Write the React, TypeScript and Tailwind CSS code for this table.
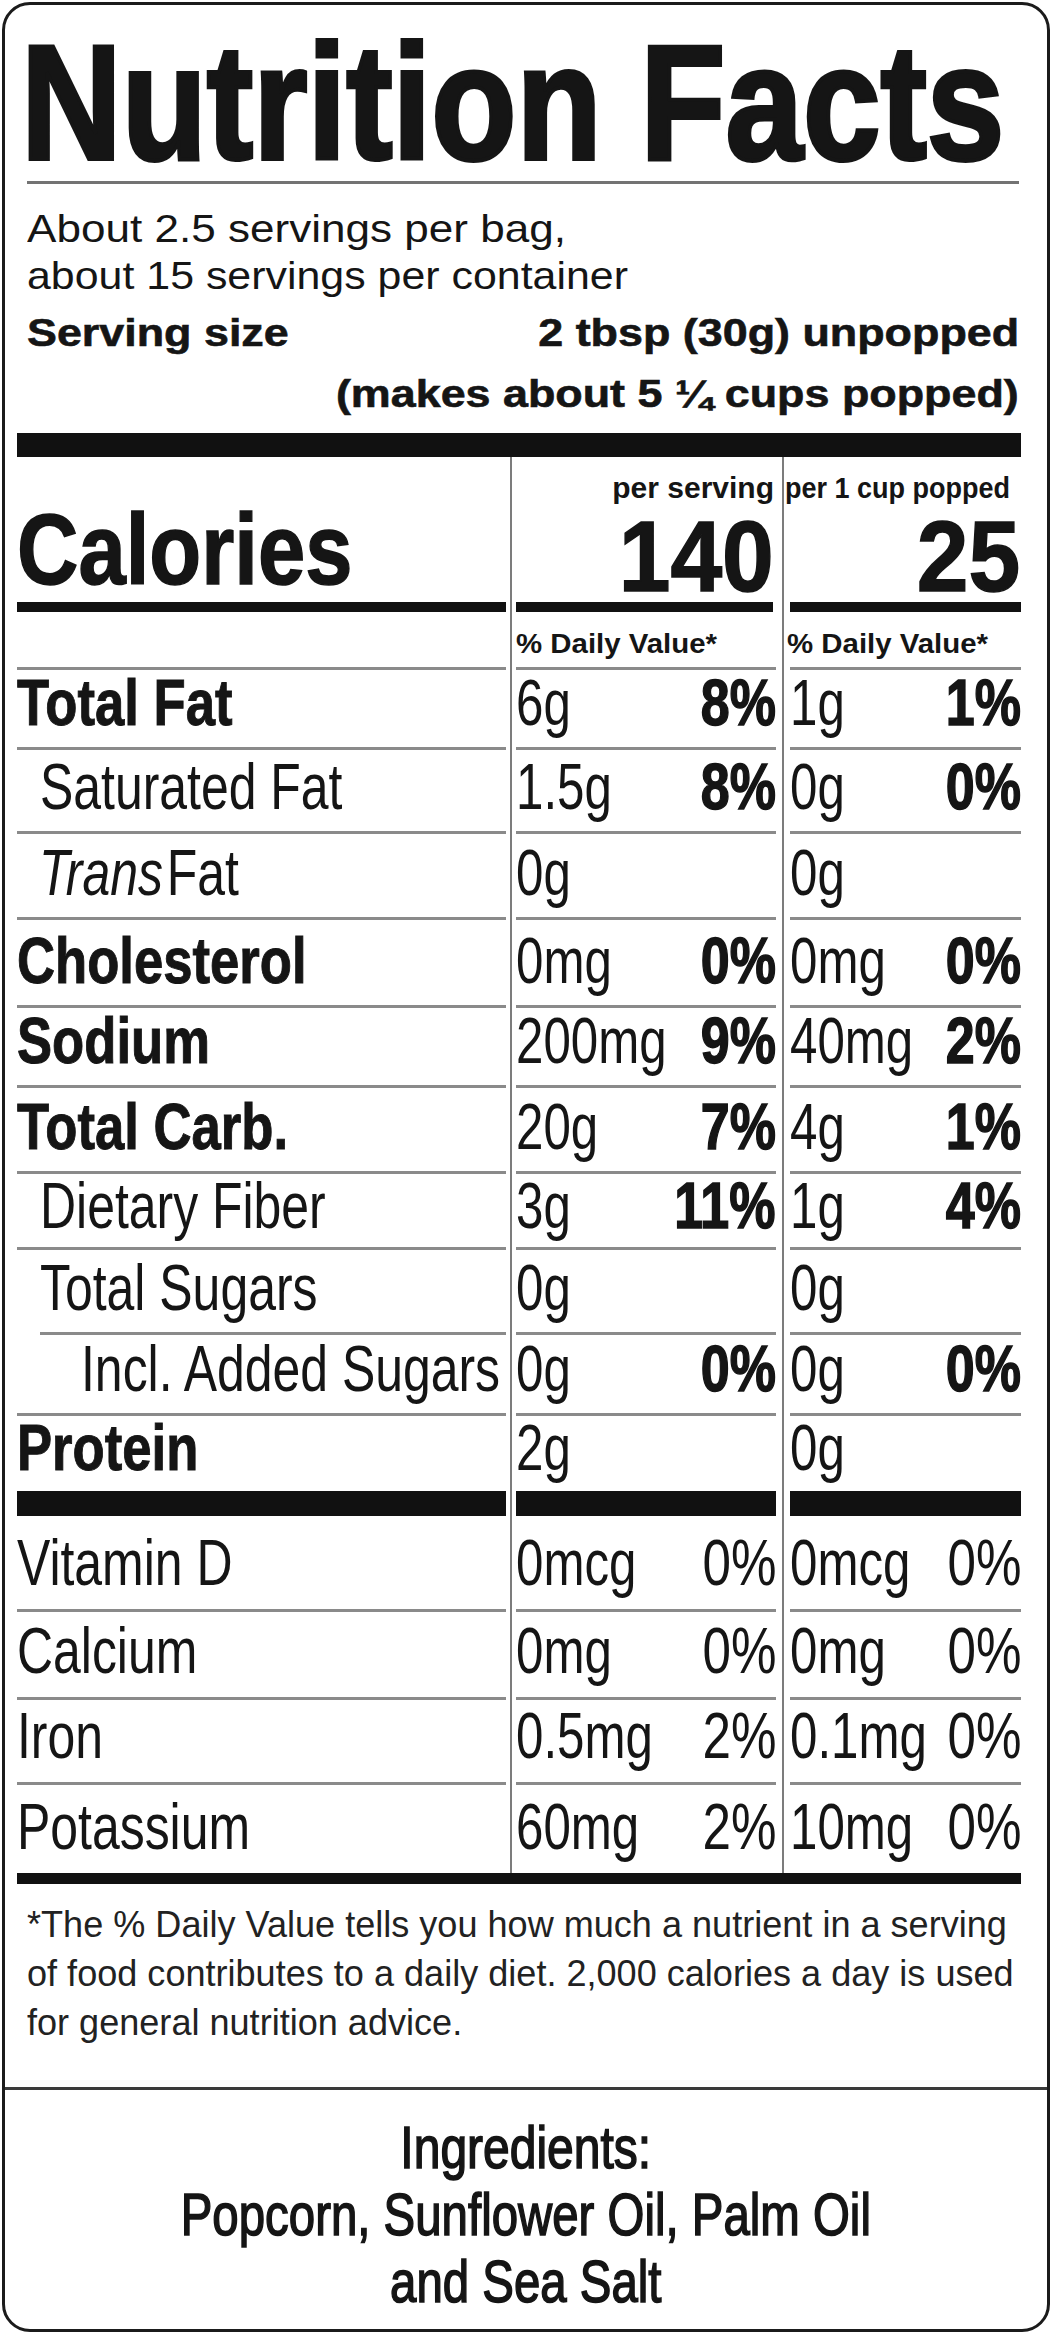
import type { ReactNode } from "react";

type Nutrient = {
  label: ReactNode;
  bold?: boolean;
  pad?: string;
  rule?: string;
  noRule?: boolean;
  h: string;
  a: string;
  ap?: string;
  b: string;
  bp?: string;
};

const mainRows: Nutrient[] = [
  { label: "Total Fat", bold: true, h: "h-[80px]", a: "6g", ap: "8%", b: "1g", bp: "1%" },
  { label: "Saturated Fat", pad: "pl-[23px]", h: "h-[84px]", a: "1.5g", ap: "8%", b: "0g", bp: "0%" },
  {
    label: (
      <>
        <i className="mr-[5px]">Trans</i>Fat
      </>
    ),
    pad: "pl-[22px]",
    h: "h-[86px]",
    a: "0g",
    b: "0g",
  },
  { label: "Cholesterol", bold: true, h: "h-[88px]", a: "0mg", ap: "0%", b: "0mg", bp: "0%" },
  { label: "Sodium", bold: true, h: "h-[80px]", a: "200mg", ap: "9%", b: "40mg", bp: "2%" },
  { label: "Total Carb.", bold: true, h: "h-[86px]", a: "20g", ap: "7%", b: "4g", bp: "1%" },
  { label: "Dietary Fiber", pad: "pl-[23px]", h: "h-[76px]", a: "3g", ap: "11%", b: "1g", bp: "4%" },
  { label: "Total Sugars", pad: "pl-[23px]", h: "h-[85px]", a: "0g", b: "0g" },
  {
    label: "Incl. Added Sugars",
    pad: "pl-[64px]",
    rule: "ml-[23px]",
    h: "h-[81px]",
    a: "0g",
    ap: "0%",
    b: "0g",
    bp: "0%",
  },
  { label: "Protein", bold: true, h: "h-[78px]", a: "2g", b: "0g" },
];

const vitaminRows: Nutrient[] = [
  { label: "Vitamin D", noRule: true, h: "h-[93px]", a: "0mcg", ap: "0%", b: "0mcg", bp: "0%" },
  { label: "Calcium", h: "h-[88px]", a: "0mg", ap: "0%", b: "0mg", bp: "0%" },
  { label: "Iron", h: "h-[85px]", a: "0.5mg", ap: "2%", b: "0.1mg", bp: "0%" },
  { label: "Potassium", h: "h-[91px]", a: "60mg", ap: "2%", b: "10mg", bp: "0%" },
];

function TableRow({ h, c1, c2, c3 }: { h: string; c1: ReactNode; c2: ReactNode; c3: ReactNode }) {
  return (
    <div className={`flex ${h}`}>
      <div className="flex w-[489px] flex-col">{c1}</div>
      <div className="flex w-[10px] justify-center">
        <div className="w-[2px] bg-[#7c7c7c]" />
      </div>
      <div className="flex w-[260px] flex-col">{c2}</div>
      <div className="flex w-[14px] justify-center">
        <div className="w-[2px] bg-[#7c7c7c]" />
      </div>
      <div className="flex w-[231px] flex-col">{c3}</div>
    </div>
  );
}

function Rule({ extra = "" }: { extra?: string }) {
  return <div className={`h-[3px] shrink-0 bg-[#8a8a8a] ${extra}`} />;
}

// amount on the left, % daily value on the right, both sitting on the same baseline
function Amounts({ v, p, bold, pb }: { v: string; p?: string; bold: boolean; pb: string }) {
  return (
    <div className={`grid flex-1 grid-cols-1 grid-rows-1 items-end ${pb}`}>
      <span className="col-start-1 row-start-1 origin-left scale-x-[0.77] justify-self-start whitespace-nowrap text-[64px] leading-[64px]">
        {v}
      </span>
      {p &&
        (bold ? (
          <span className="col-start-1 row-start-1 origin-right scale-x-[0.8] justify-self-end whitespace-nowrap text-[65px] font-bold leading-[64px] [-webkit-text-stroke:1.5px_#151515]">
            {p}
          </span>
        ) : (
          <span className="col-start-1 row-start-1 origin-right scale-x-[0.8] justify-self-end whitespace-nowrap text-[64px] leading-[64px]">
            {p}
          </span>
        ))}
    </div>
  );
}

function NutrientRow({ n, lower }: { n: Nutrient; lower?: boolean }) {
  const pb = lower ? "pb-[14px]" : "pb-[12px]";
  return (
    <TableRow
      h={n.h}
      c1={
        <>
          {!n.noRule && <Rule extra={n.rule ?? ""} />}
          <div className={`flex flex-1 items-end ${pb} ${n.pad ?? ""}`}>
            {n.bold ? (
              <span className="origin-left scale-x-[0.81] whitespace-nowrap text-[65px] font-bold leading-[64px] [-webkit-text-stroke:1px_#151515]">
                {n.label}
              </span>
            ) : (
              <span className="origin-left scale-x-[0.78] whitespace-nowrap text-[64px] leading-[64px]">
                {n.label}
              </span>
            )}
          </div>
        </>
      }
      c2={
        <>
          {!n.noRule && <Rule />}
          <Amounts v={n.a} p={n.ap} bold={!lower} pb={pb} />
        </>
      }
      c3={
        <>
          {!n.noRule && <Rule />}
          <Amounts v={n.b} p={n.bp} bold={!lower} pb={pb} />
        </>
      }
    />
  );
}

export default function App() {
  return (
    <div className="min-h-[2334px] bg-white p-[2px] font-['Liberation_Sans',Arial,Helvetica,sans-serif] text-[#151515]">
      <div className="flex h-[2330px] w-[1048px] flex-col overflow-hidden rounded-[28px] border-[3px] border-[#1b1b1b]">
        {/* heading + serving info */}
        <div className="pl-[22px] pr-[28px] pt-[23px]">
          <div className="-ml-[6px] h-[150px] origin-left scale-x-[0.855] whitespace-nowrap text-[163px] font-bold leading-[150px] [-webkit-text-stroke:4px_#151515]">
            Nutrition Facts
          </div>
          <div className="mt-[3px] h-[3px] bg-[#737373]" />

          <div className="mt-[21px] h-[47px] origin-left scale-x-[1.13] whitespace-nowrap text-[39px] leading-[47px]">
            About 2.5 servings per bag,
          </div>
          <div className="h-[47px] origin-left scale-x-[1.1] whitespace-nowrap text-[39px] leading-[47px]">
            about 15 servings per container
          </div>
          <div className="mt-[10px] flex h-[47px] justify-between text-[39px] font-bold leading-[47px] [-webkit-text-stroke:0.6px_#151515]">
            <span className="origin-left scale-x-[1.15] whitespace-nowrap">Serving size</span>
            <span className="origin-right scale-x-[1.15] whitespace-nowrap">2 tbsp (30g) unpopped</span>
          </div>
          <div className="mt-[14px] flex h-[47px] justify-end text-[39px] font-bold leading-[47px] [-webkit-text-stroke:0.6px_#151515]">
            <span className="origin-right scale-x-[1.15] whitespace-nowrap">
              (makes about 5 ¼ cups popped)
            </span>
          </div>
        </div>

        {/* table */}
        <div className="pl-[12px]">
          <div className="mt-[16px] h-[24px] w-[1004px] bg-[#111]" />

          <TableRow
            h="h-[145px]"
            c1={
              <div className="flex pt-[42px]">
                <span className="origin-left scale-x-[0.85] whitespace-nowrap text-[100px] font-bold leading-[100px] [-webkit-text-stroke:1.5px_#151515]">
                  Calories
                </span>
              </div>
            }
            c2={
              <div className="flex flex-col items-end pr-[2px] pt-[16px]">
                <span className="whitespace-nowrap text-[30px] font-bold leading-[30px]">per serving</span>
                <span className="mt-[3px] origin-right scale-x-[0.93] text-[100px] font-bold leading-[100px] [-webkit-text-stroke:1.5px_#151515]">
                  140
                </span>
              </div>
            }
            c3={
              <div className="flex flex-col pr-[1px] pt-[16px]">
                <span className="-ml-[5px] self-start origin-left scale-x-[0.9] whitespace-nowrap text-[30px] font-bold leading-[30px]">
                  per 1 cup popped
                </span>
                <span className="mt-[3px] self-end origin-right scale-x-[0.93] text-[100px] font-bold leading-[100px] [-webkit-text-stroke:1.5px_#151515]">
                  25
                </span>
              </div>
            }
          />

          <TableRow
            h="h-[10px]"
            c1={<div className="flex-1 bg-[#111]" />}
            c2={<div className="mr-[3px] flex-1 bg-[#111]" />}
            c3={<div className="flex-1 bg-[#111]" />}
          />

          <TableRow
            h="h-[55px]"
            c1={<div />}
            c2={
              <div className="flex pt-[18px]">
                <span className="origin-left scale-x-[1.05] whitespace-nowrap text-[28px] font-bold leading-[28px]">
                  % Daily Value*
                </span>
              </div>
            }
            c3={
              <div className="-ml-[3px] flex pt-[18px]">
                <span className="origin-left scale-x-[1.05] whitespace-nowrap text-[28px] font-bold leading-[28px]">
                  % Daily Value*
                </span>
              </div>
            }
          />

          {mainRows.map((n, i) => (
            <NutrientRow key={i} n={n} />
          ))}

          <TableRow
            h="h-[25px]"
            c1={<div className="flex-1 bg-[#111]" />}
            c2={<div className="flex-1 bg-[#111]" />}
            c3={<div className="flex-1 bg-[#111]" />}
          />

          {vitaminRows.map((n, i) => (
            <NutrientRow key={i} n={n} lower />
          ))}

          <div className="h-[11px] w-[1004px] bg-[#111]" />

          <div className="h-[203px] pl-[10px] pt-[16px] text-[37px] leading-[49px] text-[#222]">
            <div className="origin-left scale-x-[0.975] whitespace-nowrap">
              *The % Daily Value tells you how much a nutrient in a serving
            </div>
            <div className="origin-left scale-x-[0.975] whitespace-nowrap">
              of food contributes to a daily diet. 2,000 calories a day is used
            </div>
            <div className="origin-left scale-x-[0.975] whitespace-nowrap">
              for general nutrition advice.
            </div>
          </div>
        </div>

        <div className="h-[3px] bg-[#3a3a3a]" />

        {/* ingredients */}
        <div className="flex flex-col items-center pt-[24px] text-[60px] leading-[67px] [-webkit-text-stroke:1.6px_#151515]">
          <span className="scale-x-[0.8] whitespace-nowrap">Ingredients:</span>
          <span className="scale-x-[0.79] whitespace-nowrap">Popcorn, Sunflower Oil, Palm Oil</span>
          <span className="scale-x-[0.79] whitespace-nowrap">and Sea Salt</span>
        </div>
      </div>
    </div>
  );
}
